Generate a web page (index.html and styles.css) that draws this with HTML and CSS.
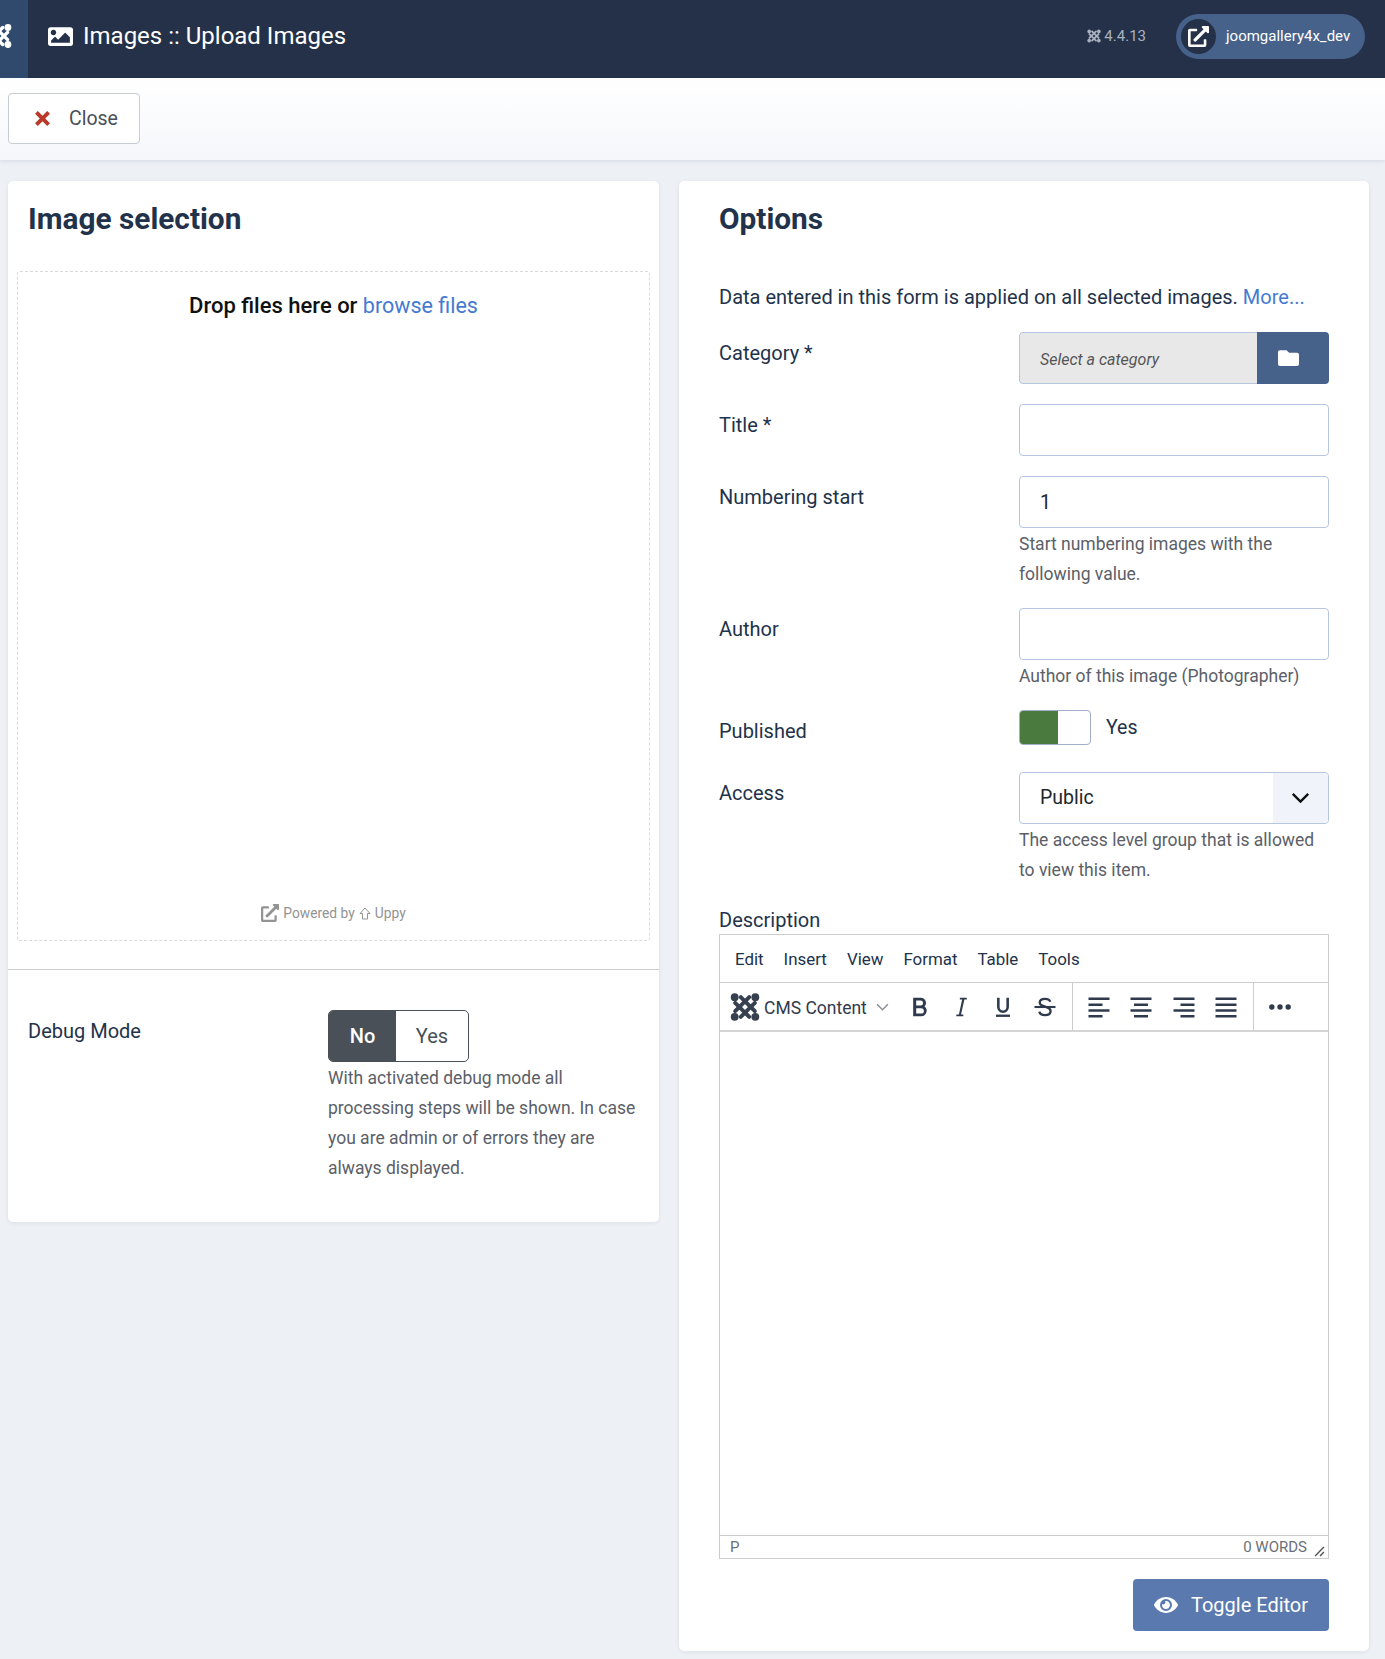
FILE: index.html
```html
<!DOCTYPE html>
<html lang="en">
  <head>
    <meta charset="UTF-8" />
    <meta name="viewport" content="width=device-width, initial-scale=1.0" />
    <title>Images :: Upload Images</title>
    <link rel="stylesheet" href="styles.css">
  </head>
  <body>
    <svg class="defs" width="0" height="0">
      <symbol id="joomla" viewBox="0 0 32 32">
        <g fill="none" stroke="currentColor" stroke-width="4.200" stroke-linecap="round">
          <path d="M5.500 11.500 L20.500 26.500" />
          <path d="M11.500 5.500 L26.500 20.500" />
          <path d="M5.500 20.500 L20.500 5.500" />
          <path d="M11.500 26.500 L26.500 11.500" />
        </g>
        <g fill="currentColor">
          <circle cx="5" cy="5.500" r="4.200" /><circle cx="27" cy="5.500" r="4.200" />
          <circle cx="5" cy="26.500" r="4.200" /><circle cx="27" cy="26.500" r="4.200" />
        </g>
      </symbol>
      <symbol id="external" viewBox="0 0 512 512">
        <path fill="currentColor" d="M432 320h-32a16 16 0 0 0-16 16v112H64V128h144a16 16 0 0 0 16-16V80a16 16 0 0 0-16-16H48a48 48 0 0 0-48 48v352a48 48 0 0 0 48 48h352a48 48 0 0 0 48-48V336a16 16 0 0 0-16-16zM488 0H360c-21.370 0-32.050 25.910-17 41l35.730 35.730L135 320.370a24 24 0 0 0 0 34L157.670 377a24 24 0 0 0 34 0l243.610-243.680L471 169c15 15 41 4.500 41-17V24a24 24 0 0 0-24-24z" />
      </symbol>
    </svg>

    <header class="topbar">
      <div class="brand"><svg class="brand-logo"><use href="#joomla" /></svg></div>
      <svg class="title-icon" viewBox="0 64 512 384">
        <path fill="currentColor" fill-rule="evenodd" d="M464 448H48c-26.510 0-48-21.490-48-48V112c0-26.510 21.490-48 48-48h416c26.510 0 48 21.490 48 48v288c0 26.510-21.490 48-48 48zM112 120c-30.930 0-56 25.070-56 56s25.070 56 56 56 56-25.070 56-56-25.070-56-56-56zM64 384h384V272l-87.500-87.500c-4.700-4.700-12.300-4.700-17 0L208 320l-55.500-55.500c-4.700-4.700-12.300-4.700-17 0L64 336v48z" />
      </svg>
      <h1 class="page-title">Images :: Upload Images</h1>
      <div class="version"><svg class="version-logo"><use href="#joomla" /></svg>4.4.13</div>
      <a class="site-pill">
        <span class="site-icon"><svg><use href="#external" /></svg></span>
        <span>joomgallery4x_dev</span>
      </a>
    </header>

    <div class="toolbar">
      <button class="btn-close">
        <svg viewBox="0 0 14 14"><path d="M2 2 L12 12 M12 2 L2 12" stroke="currentColor" stroke-width="3.200" /></svg>
        <span>Close</span>
      </button>
    </div>

    <main class="content">
      <section class="card card-left">
        <h2>Image selection</h2>
        <div class="dropzone">
          <p class="drop-text">Drop files here or <a>browse files</a></p>
          <div class="powered">
            <svg class="powered-ext"><use href="#external" /></svg>
            <span>Powered by</span>
            <svg class="powered-arrow" viewBox="0 0 12 13"><path d="M6 1 L11 6.500 H8.500 V12 H3.500 V6.500 H1 Z" fill="none" stroke="currentColor" stroke-width="1" /></svg>
            <span>Uppy</span>
          </div>
        </div>
        <div class="debug">
          <div class="debug-label">Debug Mode</div>
          <div class="debug-control">
            <div class="switcher">
              <span class="switcher-on">No</span>
              <span class="switcher-off">Yes</span>
            </div>
            <div class="hint hint-debug">With activated debug mode all processing steps will be shown. In case you are admin or of errors they are always displayed.</div>
          </div>
        </div>
      </section>

      <section class="card card-right">
        <h2>Options</h2>
        <p class="intro">Data entered in this form is applied on all selected images. <a>More...</a></p>

        <div class="row">
          <label>Category *</label>
          <div class="control">
            <div class="picker">
              <span class="picker-value">Select a category</span>
              <span class="picker-btn">
                <svg viewBox="0 64 512 384"><path fill="currentColor" d="M464 128H272l-64-64H48C21.490 64 0 85.490 0 112v288c0 26.510 21.490 48 48 48h416c26.510 0 48-21.490 48-48V176c0-26.510-21.490-48-48-48z" /></svg>
              </span>
            </div>
          </div>
        </div>

        <div class="row">
          <label>Title *</label>
          <div class="control"><div class="input"></div></div>
        </div>

        <div class="row row-tight">
          <label>Numbering start</label>
          <div class="control">
            <div class="input">1</div>
            <div class="hint">Start numbering images with the following value.</div>
          </div>
        </div>

        <div class="row row-tight">
          <label>Author</label>
          <div class="control">
            <div class="input"></div>
            <div class="hint">Author of this image (Photographer)</div>
          </div>
        </div>

        <div class="row row-published">
          <label>Published</label>
          <div class="control toggle-wrap">
            <span class="toggle"><span class="toggle-fill"></span></span>
            <span class="toggle-text">Yes</span>
          </div>
        </div>

        <div class="row">
          <label>Access</label>
          <div class="control">
            <div class="select">
              <span class="select-value">Public</span>
              <span class="select-arrow">
                <svg viewBox="0 0 16 10"><path d="M1.500 1.500 L8 8 L14.500 1.500" fill="none" stroke="currentColor" stroke-width="2" /></svg>
              </span>
            </div>
            <div class="hint">The access level group that is allowed to view this item.</div>
          </div>
        </div>

        <div class="desc-label">Description</div>
        <div class="editor">
          <div class="editor-menu">
            <span>Edit</span><span>Insert</span><span>View</span><span>Format</span><span>Table</span><span>Tools</span>
          </div>
          <div class="editor-tools">
            <div class="tool-group group-format">
              <svg class="editor-logo"><use href="#joomla" /></svg>
              <span class="format-name">CMS Content</span>
              <svg class="format-caret" viewBox="0 0 12 7"><path d="M1 1 L6 6 L11 1" fill="none" stroke="currentColor" stroke-width="1.300" /></svg>
              <svg class="tool" viewBox="0 0 24 24"><path fill="currentColor" d="M7 4h6.500a4.500 4.500 0 0 1 3.300 7.500A4.800 4.800 0 0 1 14 20H7zm2.600 2.400v4.300h3.700a2.150 2.150 0 0 0 0-4.300zm0 6.700v4.500h4.300a2.250 2.250 0 0 0 0-4.500z" /></svg>
              <svg class="tool" viewBox="0 0 24 24"><path fill="currentColor" d="M11 4h6v1.500h-2.100L12 18.500h2V20H8v-1.500h2.200L13 5.500h-2z" /></svg>
              <svg class="tool" viewBox="0 0 24 24"><path d="M8 4v8a4 4 0 0 0 8 0V4" fill="none" stroke="currentColor" stroke-width="2.200" /><path d="M6 19.500h12" stroke="currentColor" stroke-width="2" /></svg>
              <svg class="tool" viewBox="0 0 24 24"><path d="M16.500 7.500C16 5.500 14 5 12 5c-2.500 0-4.500 1.200-4.500 3.300S10 11 12 11.600c2.500.7 4.800 1.500 4.800 3.900S14.500 19 12 19c-2.300 0-4.300-.8-4.900-3" fill="none" stroke="currentColor" stroke-width="2" /><path d="M3 12h18" stroke="currentColor" stroke-width="1.800" /></svg>
            </div>
            <div class="tool-group group-align">
              <svg class="tool" viewBox="0 0 24 24"><path d="M3 5h18M3 10h12M3 15h18M3 20h12" stroke="currentColor" stroke-width="2.200" /></svg>
              <svg class="tool" viewBox="0 0 24 24"><path d="M3 5h18M6 10h12M3 15h18M6 20h12" stroke="currentColor" stroke-width="2.200" /></svg>
              <svg class="tool" viewBox="0 0 24 24"><path d="M3 5h18M9 10h12M3 15h18M9 20h12" stroke="currentColor" stroke-width="2.200" /></svg>
              <svg class="tool" viewBox="0 0 24 24"><path d="M3 5h18M3 10h18M3 15h18M3 20h18" stroke="currentColor" stroke-width="2.200" /></svg>
            </div>
            <div class="tool-group group-more">
              <svg class="tool" viewBox="0 0 24 24"><circle cx="5" cy="12" r="2.300" fill="currentColor" /><circle cx="12" cy="12" r="2.300" fill="currentColor" /><circle cx="19" cy="12" r="2.300" fill="currentColor" /></svg>
            </div>
          </div>
          <div class="editor-body"></div>
          <div class="editor-status">
            <span>P</span>
            <span class="words">0 WORDS</span>
            <svg class="grip" viewBox="0 0 10 10"><path d="M1 9 L9 1 M5.500 9 L9 5.500" stroke="currentColor" stroke-width="1.300" /></svg>
          </div>
        </div>
        <div class="editor-actions">
          <button class="btn-toggle">
            <svg viewBox="0 64 576 384"><path fill="currentColor" d="M572.520 241.400C518.290 135.590 410.930 64 288 64S57.680 135.640 3.480 241.410a32.350 32.350 0 0 0 0 29.190C57.710 376.410 165.070 448 288 448s230.320-71.640 284.520-177.410a32.350 32.350 0 0 0 0-29.190zM288 400a144 144 0 1 1 144-144 143.930 143.930 0 0 1-144 144zm0-240a95.310 95.310 0 0 0-25.310 3.790 47.850 47.850 0 0 1-66.900 66.900A95.780 95.780 0 1 0 288 160z" /></svg>
            <span>Toggle Editor</span>
          </button>
        </div>
      </section>
    </main>
  </body>
</html>
```

FILE: styles.css
```css
* {
  box-sizing: border-box;
}

body {
  margin: 0;
  font-family: Roboto, "Liberation Sans", sans-serif;
  font-size: 16px;
  color: #22324a;
  background-color: #edf0f5;
}

a {
  color: #457ad1;
}

.defs {
  display: block;
  height: 0;
}

/* top bar */
.topbar {
  display: flex;
  align-items: center;
  height: 78px;
  background-color: #243148;
  color: #fff;
  padding-right: 20px;
  padding-bottom: 6px;
}

.brand {
  align-self: flex-start;
  width: 28px;
  height: 78px;
  padding-bottom: 6px;
  background-color: #2f4a6d;
  overflow: hidden;
  display: flex;
  align-items: center;
  justify-content: flex-end;
  flex-shrink: 0;
}

.brand-logo {
  width: 26px;
  height: 26px;
  flex-shrink: 0;
  margin-right: 16px;
  color: #fff;
}

.title-icon {
  width: 25px;
  height: 19px;
  margin-left: 20px;
  margin-right: 10px;
  flex-shrink: 0;
}

.page-title {
  margin: 0;
  font-size: 24px;
  font-weight: 400;
  flex: 1;
}

.version {
  display: flex;
  align-items: center;
  gap: 3px;
  font-size: 15px;
  color: #a9b2c0;
  margin-right: 30px;
}

.version-logo {
  width: 14px;
  height: 14px;
}

.site-pill {
  display: flex;
  align-items: center;
  gap: 10px;
  width: 189px;
  height: 45px;
  padding-left: 5px;
  border-radius: 23px;
  background-color: #46618a;
  font-size: 15px;
  color: #fff;
}

.site-icon {
  display: flex;
  align-items: center;
  justify-content: center;
  width: 35px;
  height: 35px;
  border-radius: 50%;
  background-color: #243148;
}

.site-icon svg {
  width: 21px;
  height: 21px;
}

/* action toolbar */
.toolbar {
  height: 82px;
  padding: 15px 8px;
  background: linear-gradient(#fff, #f6f7fb);
  box-shadow: 0 1px 4px rgba(30, 50, 90, 0.12);
}

.btn-close {
  display: flex;
  align-items: center;
  width: 132px;
  height: 51px;
  padding: 0 0 0 25px;
  background-color: #fff;
  border: 1px solid #c8ccd4;
  border-radius: 4px;
  font-family: inherit;
  font-size: 19.500px;
  color: #495057;
}

.btn-close svg {
  width: 17px;
  height: 17px;
  color: #b93a29;
  margin-right: 18px;
}

/* main columns */
.content {
  display: flex;
  align-items: flex-start;
  gap: 20px;
  padding: 21px 16px 8px 8px;
}

.card {
  background-color: #fff;
  border-radius: 5px;
  box-shadow: 0 1px 4px rgba(30, 50, 90, 0.08);
}

.card h2 {
  margin: 0;
  font-size: 29.800px;
  line-height: 38px;
  font-weight: 700;
  color: #22324a;
}

.card-left {
  width: 651px;
  padding-top: 19px;
  padding-bottom: 39px;
}

.card-left h2 {
  padding-left: 20px;
}

.card-right {
  width: 690px;
  height: 1470px;
  padding: 19px 40px 20px;
}

/* uppy drop area */
.dropzone {
  display: flex;
  flex-direction: column;
  justify-content: space-between;
  align-items: center;
  height: 670px;
  margin: 33px 9px 28px;
  border: 1px dashed #d8dadd;
  border-radius: 3px;
  padding: 19px 0 18px;
}

.drop-text {
  margin: 0;
  font-size: 22px;
  line-height: 30px;
  font-weight: 500;
  color: #111;
}

.drop-text a {
  font-size: 21.500px;
  font-weight: 400;
}

.powered {
  display: flex;
  align-items: center;
  gap: 4px;
  font-size: 13.800px;
  color: #939393;
}

.powered-ext {
  width: 18px;
  height: 18px;
}

.powered-arrow {
  width: 12px;
  height: 13px;
}

/* debug mode row */
.debug {
  display: flex;
  border-top: 1px solid #ccc;
  padding: 40px 20px 0;
}

.debug-label {
  width: 300px;
  font-size: 20px;
  line-height: 30px;
  padding-top: 6px;
}

.debug-control {
  width: 310px;
}

.switcher {
  display: flex;
  width: 141px;
  height: 52px;
  border: 1px solid #495057;
  border-radius: 5px;
  overflow: hidden;
  font-size: 20px;
}

.switcher span {
  display: flex;
  align-items: center;
  justify-content: center;
}

.switcher-on {
  width: 67px;
  background-color: #495057;
  color: #fff;
  font-weight: 500;
}

.switcher-off {
  flex: 1;
  color: #495057;
}

.hint {
  font-size: 17.500px;
  line-height: 30px;
  color: #5b6068;
  margin-top: 1px;
}

/* options form */
.intro {
  margin: 44px 0 20px;
  font-size: 20px;
  line-height: 30px;
}

.row {
  display: flex;
  margin-bottom: 20px;
}

.row-tight {
  margin-bottom: 19px;
}

.row label {
  width: 300px;
  font-size: 20px;
  line-height: 30px;
  padding-top: 6px;
  flex-shrink: 0;
}

.control {
  width: 310px;
}

.input {
  height: 52px;
  padding: 0 20px;
  border: 1px solid #b7c6de;
  border-radius: 4px;
  font-size: 19.500px;
  line-height: 52px;
  color: #22262b;
}

.input + .hint {
  margin-top: 1px;
}

.picker {
  display: flex;
  height: 52px;
  border-radius: 4px;
  overflow: hidden;
}

.picker-value {
  flex: 1;
  display: flex;
  align-items: center;
  padding-left: 20px;
  padding-top: 2px;
  background-color: #e8e8e8;
  border: 1px solid #b7c6de;
  border-right: 0;
  border-radius: 4px 0 0 4px;
  font-style: italic;
  font-size: 16px;
  color: #555;
}

.picker-btn {
  display: flex;
  align-items: center;
  justify-content: center;
  width: 72px;
  padding-right: 10px;
  background-color: #46618a;
  color: #fff;
}

.picker-btn svg {
  width: 21px;
  height: 16px;
}

.row-published {
  margin-bottom: 27px;
  height: 35px;
}

.toggle-wrap {
  display: flex;
  align-items: flex-start;
  gap: 15px;
}

.toggle {
  display: block;
  width: 72px;
  height: 35px;
  border: 1px solid #9fb0c8;
  border-radius: 4px;
  overflow: hidden;
}

.toggle-fill {
  display: block;
  width: 38px;
  height: 100%;
  background-color: #4a7a3d;
}

.toggle-text {
  font-size: 19.500px;
  line-height: 36px;
}

.select {
  display: flex;
  height: 52px;
  border: 1px solid #b7c6de;
  border-radius: 4px;
  overflow: hidden;
  font-size: 19.500px;
  color: #22262b;
}

.select-value {
  flex: 1;
  padding-left: 20px;
  line-height: 50px;
}

.select-arrow {
  display: flex;
  align-items: center;
  justify-content: center;
  width: 55px;
  background-color: #f0f3fa;
  color: #111;
}

.select-arrow svg {
  width: 19px;
  height: 12px;
}

/* wysiwyg box */
.desc-label {
  font-size: 20px;
  line-height: 28px;
  padding-top: 1px;
}

.editor {
  display: flex;
  flex-direction: column;
  height: 625px;
  border: 1px solid #ccc;
}

.editor-menu {
  display: flex;
  align-items: center;
  gap: 20px;
  height: 48px;
  padding-left: 15px;
  padding-top: 1px;
  font-size: 16.900px;
  border-bottom: 1px solid #ccc;
}

.editor-tools {
  display: flex;
  height: 49px;
  border-bottom: 2px solid #d5d5d5;
  color: #2f3b4c;
}

.tool-group {
  display: flex;
  align-items: center;
  gap: 14.300px;
  padding: 0 8px;
  border-right: 1px solid #ccc;
}

.group-format {
  width: 353px;
  gap: 0;
  padding-left: 10px;
}

.group-align {
  width: 181px;
  padding: 0 12px;
}

.group-more {
  border-right: 0;
  padding: 0 12px;
}

.editor-logo {
  width: 30px;
  height: 30px;
  color: #36404f;
  flex-shrink: 0;
  margin-right: 4px;
}

.format-name {
  font-size: 17.500px;
  white-space: nowrap;
  width: 112px;
  flex-shrink: 0;
  padding-top: 2px;
}

.format-caret {
  width: 13px;
  height: 8px;
  color: #8a8f96;
  flex-shrink: 0;
  margin-right: 15.500px;
}

.tool {
  width: 28px;
  height: 28px;
  flex-shrink: 0;
}

.group-format .tool {
  margin-right: 14.300px;
}

.editor-body {
  flex: 1;
}

.editor-status {
  display: flex;
  align-items: center;
  height: 23px;
  padding: 0 3px 0 10px;
  border-top: 1px solid #ccc;
  font-size: 15px;
  color: #6b7077;
}

.words {
  margin-left: auto;
  margin-right: 7px;
}

.grip {
  width: 11px;
  height: 11px;
  margin-top: 8px;
  color: #555;
}

.editor-actions {
  display: flex;
  justify-content: flex-end;
  margin-top: 20px;
}

.btn-toggle {
  display: flex;
  align-items: center;
  justify-content: center;
  gap: 13px;
  width: 196px;
  height: 52px;
  background-color: #5a7aaf;
  border: 0;
  border-radius: 4px;
  color: #fff;
  font-family: inherit;
  font-size: 20px;
}

.btn-toggle svg {
  width: 24px;
  height: 16px;
}
```
